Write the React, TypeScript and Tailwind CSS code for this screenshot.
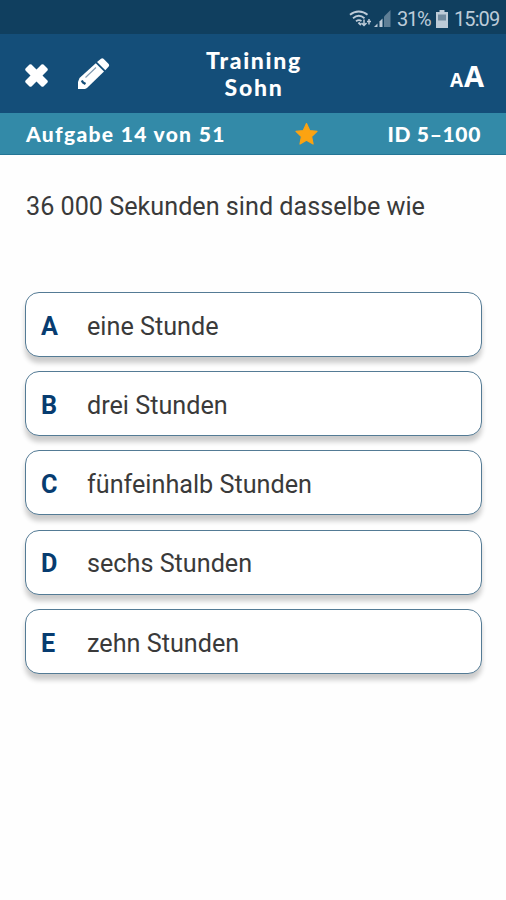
const answers = [
  { letter: "A", text: "eine Stunde" },
  { letter: "B", text: "drei Stunden" },
  { letter: "C", text: "fünfeinhalb Stunden" },
  { letter: "D", text: "sechs Stunden" },
  { letter: "E", text: "zehn Stunden" },
];

function StatusBar() {
  return (
    <div className="flex h-[34px] items-center justify-end bg-[#103f5f] pt-[3px] pr-[6px] text-[20px] leading-none text-[#bdcbd8]">
      <svg width="23" height="18" viewBox="0 0 23 18" fill="none" stroke="#bdcbd8" strokeWidth="1.8" className="mr-[2px]">
        <path d="M1 4.8C6 .4 13.5 .4 18.5 4.8M4 8.2c3.600-3 8-3 11.500 0M7 11.300c2-1.500 3.800-1.500 5.500-.2" />
        <path d="M9.500 12.500l2.500 2.500" strokeWidth="2" />
        <path d="M15 9.500v6M12.500 13l2.500 2.500 2.500-2.500M20 14.500V9M18 11.500h4" strokeWidth="1.500" />
      </svg>
      <svg width="17" height="17" viewBox="0 0 17 17" className="mr-[6px]">
        <path d="M0 17l3.500-3.500V17z" fill="#bdcbd8" />
        <path d="M5.500 17v-5.500L8.500 8.500V17z" fill="#bdcbd8" />
        <path d="M10 17V6.500L16.500 0v17z" fill="#5f7f96" />
      </svg>
      <span className="w-[34px] whitespace-nowrap tracking-[-1.2px]">31%</span>
      <svg width="12" height="18" viewBox="0 0 12 18" className="mr-[6px] ml-[5px]">
        <path d="M3.500 0h5v2H12v16H0V2h3.500z" fill="#bdcbd8" />
        <path d="M2 4.500h8v6H2z" fill="#718ba0" />
      </svg>
      <span className="w-[46px] whitespace-nowrap tracking-[-0.9px]">15:09</span>
    </div>
  );
}

function Header() {
  return (
    <header className="grid h-[79px] grid-cols-[1fr_110px_1fr] items-center bg-[#144e79] text-white">
      <div className="flex items-center pl-[24px]">
        <svg width="26" height="26" viewBox="0 0 26 26" className="mt-[4px]">
          <path
            d="M5.500 1.500Q6.500 .8 7.500 1.500L12.500 6.500 17.500 1.500Q18.500 .8 19.500 1.500L23.500 5.500Q24.200 6.500 23.500 7.500L18.500 12.500 23.500 17.500Q24.200 18.500 23.500 19.500L19.500 23.500Q18.500 24.200 17.500 23.500L12.500 18.500 7.500 23.500Q6.500 24.200 5.500 23.500L1.500 19.500Q.8 18.500 1.500 17.500L6.500 12.500 1.500 7.500Q.8 6.500 1.500 5.500Z"
            fill="white"
          />
        </svg>
        <svg width="34" height="34" viewBox="0 0 34 34" className="ml-[26px]">
          <path d="M3.500 21L19.800 6.200l8.200 8.200L11 31l-2 1H2V25z" fill="white" />
          <path d="M21 5l4-3.300q1.200-1 2.500 0l5.200 5.200q1 1.300 0 2.500L29.300 13.300z" fill="white" />
          <path d="M9.500 20.500L20 10.500" stroke="#7f99af" strokeWidth="1.100" />
          <path d="M5.800 23.500l1.200 2 2.500 1.500" fill="none" stroke="#144e79" strokeWidth="2.400" />
        </svg>
      </div>
      <h1 className="pl-[2px] text-center font-['Lato'] text-[23px] leading-[27px] font-black tracking-[1.7px]">
        Training
        <br />
        Sohn
      </h1>
      <div className="flex items-baseline justify-end pt-[3px] pr-[22px] font-['Open_Sans'] leading-none font-bold">
        <span className="text-[19px]">A</span>
        <span className="ml-px text-[29px]">A</span>
      </div>
    </header>
  );
}

function ProgressBar() {
  return (
    <div className="flex h-[42px] items-center border-b border-[#247595] bg-[#338aa8] pr-[25px] pl-[26px] font-['Lato'] text-[21px] leading-none font-black text-white">
      <span className="w-[268px] whitespace-nowrap tracking-[1.32px]">Aufgabe 14 von 51</span>
      <svg width="25" height="24" viewBox="0 0 25 24">
        <path
          d="M12.500 1.500l3.200 7 7.300.9-5.400 5.100 1.500 7.500-6.600-3.700L6 22l1.400-7.500L2 9.400l7.300-.9z"
          fill="#fca311"
          stroke="#fca311"
          strokeWidth="1.200"
          strokeLinejoin="round"
        />
      </svg>
      <span className="ml-auto whitespace-nowrap tracking-[0.65px]">ID 5–100</span>
    </div>
  );
}

export default function App() {
  return (
    <div className="flex h-[900px] w-[506px] flex-col bg-[#fefefe] font-['Roboto',sans-serif]">
      <StatusBar />
      <Header />
      <ProgressBar />
      <main className="px-[25px] pt-[36px]">
        <p className="h-[101px] pl-px text-[25.2px] leading-[32px] whitespace-nowrap text-[#3a3a3a]">
          36 000 Sekunden sind dasselbe wie
        </p>
        <div className="flex flex-col gap-[14.2px]">
          {answers.map(({ letter, text }) => (
            <button
              key={letter}
              className="flex h-[65px] w-[457px] items-center rounded-[14px] border-[1.5px] border-[#547b95] bg-white pt-[4px] pl-[15px] text-left shadow-[0_6px_5px_rgba(0,0,0,0.2)]"
            >
              <span className="w-[46px] text-[25.2px] leading-none font-bold text-[#073c70]">{letter}</span>
              <span className="text-[25.2px] leading-none text-[#3a3a3a]">{text}</span>
            </button>
          ))}
        </div>
      </main>
    </div>
  );
}
